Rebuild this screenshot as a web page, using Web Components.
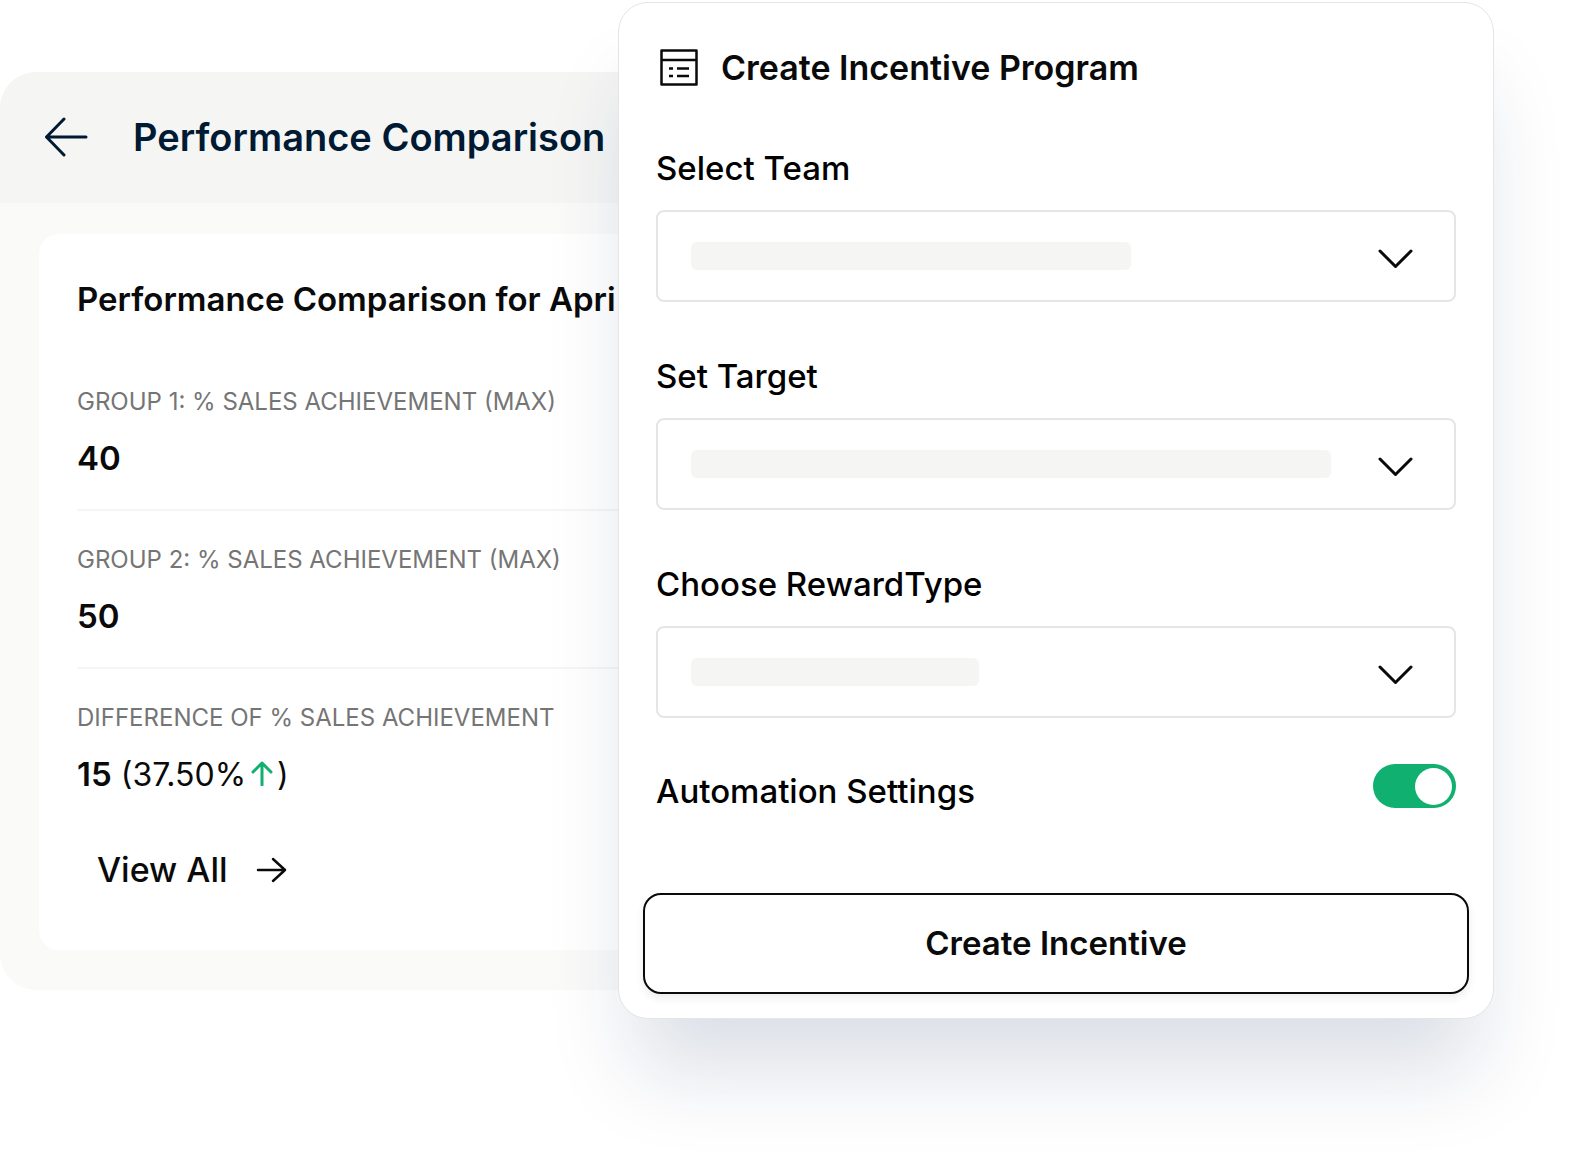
<!DOCTYPE html>
<html lang="en">
<head>
<meta charset="UTF-8">
<meta name="viewport" content="width=device-width, initial-scale=1">
<title>Create Incentive Program</title>
<style>
  body {
    margin: 0;
    background: #fff;
    color: #0a0a0a;
    font-family: Inter, "Liberation Sans", sans-serif;
  }
</style>
</head>
<body>
<incentive-page>
  <comparison-panel slot="panel" heading="Performance Comparison">
    <span slot="title">Performance Comparison for Apri</span>
    <metric-row label="Group 1: % Sales Achievement (Max)"><b>40</b></metric-row>
    <metric-row label="Group 2: % Sales Achievement (Max)"><b>50</b></metric-row>
    <metric-row label="Difference of % Sales Achievement" last><b>15</b> (37.50%<trend-arrow></trend-arrow>)</metric-row>
  </comparison-panel>

  <incentive-dialog slot="dialog">
    <span slot="title">Create Incentive Program</span>
    <select-field class="team">Select Team</select-field>
    <select-field class="target">Set Target</select-field>
    <select-field class="reward">Choose RewardType</select-field>
    <toggle-field slot="toggle" checked>Automation Settings</toggle-field>
    <span slot="action">Create Incentive</span>
  </incentive-dialog>
</incentive-page>

<script>
// Page: panel on the left, dialog laid over its right side
class IncentivePage extends HTMLElement {
  constructor() {
    super();
    this.attachShadow({ mode: 'open' }).innerHTML = `
      <style>
        :host { display: grid; grid-template-columns: 618fr 876fr 102fr; align-items: start; padding: 2px 0 148px; overflow: hidden; }
        .panel { grid-area: 1 / 1 / 2 / 3; padding: 70px 24px 0 0; min-width: 0; }
        .dialog { grid-area: 1 / 2 / 2 / 3; z-index: 1; min-width: 0; }
      </style>
      <main class="panel"><slot name="panel"></slot></main>
      <div class="dialog"><slot name="dialog"></slot></div>
    `;
  }
}

// Comparison panel with its header bar and white card
class ComparisonPanel extends HTMLElement {
  constructor() {
    super();
    this.attachShadow({ mode: 'open' });
  }

  connectedCallback() {
    this.shadowRoot.innerHTML = `
      <style>
        :host { display: block; background: #fafaf9; border-radius: 36px; overflow: hidden; white-space: nowrap; }
        header { display: flex; align-items: center; gap: 43px; padding: 42px 44px 43px; background: #f5f5f4; color: #001a33; }
        h1 { margin: 0; font-size: 38px; line-height: 46px; font-weight: 600; }
        .back { display: flex; padding: 0; border: 0; background: none; color: inherit; cursor: pointer; }
        .card { margin: 31px 39px 40px; padding: 45px 38px 60px; border-radius: 20px; background: #fff; }
        h2 { margin: 0 0 67px; font-size: 33px; line-height: 40px; font-weight: 600; }
        a { display: inline-flex; align-items: center; gap: 28px; margin: 55px 0 0 20px; font-size: 34px; line-height: 40px; font-weight: 500; color: inherit; text-decoration: none; }
        svg { display: block; fill: none; stroke: currentColor; stroke-linecap: round; stroke-linejoin: round; }
      </style>
      <header>
        <button class="back" type="button" aria-label="Back">
          <svg width="46" height="40" viewBox="0 0 46 40" stroke-width="3"><path d="M20 2 2.500 20 20 38M2.500 20H42"/></svg>
        </button>
        <h1>${this.getAttribute('heading')}</h1>
      </header>
      <section class="card">
        <h2><slot name="title"></slot></h2>
        <slot></slot>
        <a href="#all">View All
          <svg width="32" height="26" viewBox="0 0 32 26" stroke-width="2.500"><path d="M2 13H29M17 2 29 13 17 24"/></svg>
        </a>
      </section>
    `;
  }
}

class MetricRow extends HTMLElement {
  constructor() {
    super();
    this.attachShadow({ mode: 'open' });
  }

  connectedCallback() {
    this.shadowRoot.innerHTML = `
      <style>
        :host { display: block; padding-bottom: 30px; margin-bottom: 33px; border-bottom: 2px solid #f5f5f4; }
        :host([last]) { padding: 0; margin: 0; border: 0; }
        .label { margin-bottom: 21px; font-size: 24px; line-height: 32px; color: #757575; text-transform: uppercase; }
        .value { font-size: 32px; line-height: 40px; }
        ::slotted(b) { font-size: 33px; line-height: 1; font-weight: 600; }
      </style>
      <div class="label">${this.getAttribute('label')}</div>
      <div class="value"><slot></slot></div>
    `;
  }
}

class TrendArrow extends HTMLElement {
  constructor() {
    super();
    this.attachShadow({ mode: 'open' }).innerHTML = `
      <style>
        :host { display: inline-block; margin: 0 4px 0 5px; }
        svg { display: block; }
      </style>
      <svg width="22" height="26" viewBox="0 0 22 26" fill="none" stroke="#10b070" stroke-width="3" stroke-linecap="round" stroke-linejoin="round" aria-hidden="true"><path d="M11 25V3M2 12 11 3 20 12"/></svg>
    `;
  }
}

// Dialog: title, fields, toggle and submit button
class IncentiveDialog extends HTMLElement {
  constructor() {
    super();
    this.attachShadow({ mode: 'open' }).innerHTML = `
      <style>
        :host {
          display: block;
          padding: 45px 24px 24px;
          border: 1px solid #e5e5e5;
          border-radius: 30px;
          background: #fff;
          box-shadow: 0 68px 86px -16px rgba(16, 42, 84, 0.15);
        }
        header { display: flex; align-items: center; gap: 21px; margin: 0 15px 60px; }
        h2 { margin: 0; font-size: 34px; line-height: 40px; font-weight: 600; }
        .fields { display: grid; gap: 54px; margin: 0 13px 46px; }
        .toggle { margin: 0 13px 75px; }
        button {
          display: block;
          width: 100%;
          padding: 28px 24px 29px;
          border: 2px solid #0a0a0a;
          border-radius: 18px;
          background: #fff;
          box-shadow: 0 4px 8px rgba(0, 0, 0, 0.08);
          color: inherit;
          font: 600 33px/40px Inter, "Liberation Sans", sans-serif;
          cursor: pointer;
        }
      </style>
      <form>
        <header>
          <svg width="42" height="40" viewBox="0 0 42 40" fill="none" stroke="#0a0a0a" stroke-width="2.500" stroke-linejoin="round" aria-hidden="true">
            <path d="M3.500 2.500H38.500V36.500H3.500ZM3.500 12H38.500M11 20.500H15M19 20.500H31M11 28H15M19 28H31"/>
          </svg>
          <h2><slot name="title"></slot></h2>
        </header>
        <div class="fields"><slot></slot></div>
        <div class="toggle"><slot name="toggle"></slot></div>
        <button type="button"><slot name="action"></slot></button>
      </form>
    `;
  }
}

// Drop-down whose value is still a placeholder bar
class SelectField extends HTMLElement {
  constructor() {
    super();
    this.attachShadow({ mode: 'open' }).innerHTML = `
      <style>
        :host { display: block; --bar: 55%; }
        :host(.target) { --bar: 80%; }
        :host(.reward) { --bar: 36%; }
        label { display: block; margin-bottom: 22px; font-size: 33px; line-height: 40px; font-weight: 500; color: #000; }
        .box { display: grid; align-items: center; }
        .box > * { grid-area: 1 / 1; }
        select { appearance: none; width: 100%; height: 92px; border: 2px solid #e5e5e5; border-radius: 8px; background: #fff; cursor: pointer; }
        .bar { width: var(--bar); height: 28px; margin-left: 35px; border-radius: 6px; background: #f5f5f4; pointer-events: none; }
        svg { justify-self: end; margin-right: 42px; pointer-events: none; }
      </style>
      <label for="choice"><slot></slot></label>
      <div class="box">
        <select id="choice"><option></option></select>
        <span class="bar"></span>
        <svg width="36" height="28" viewBox="0 0 36 28" fill="none" stroke="#0a0a0a" stroke-width="3" stroke-linecap="round" stroke-linejoin="round" aria-hidden="true"><path d="M2 9 17.500 24.500 33 9"/></svg>
      </div>
    `;
  }
}

class ToggleField extends HTMLElement {
  constructor() {
    super();
    this.attachShadow({ mode: 'open' }).innerHTML = `
      <style>
        :host { display: flex; justify-content: space-between; align-items: flex-start; }
        label { font-size: 33px; line-height: 54px; font-weight: 500; color: #000; }
        input { appearance: none; display: flex; align-items: center; width: 83px; height: 44px; margin: 0; padding: 0 4px; border-radius: 22px; background: #d4d4d4; cursor: pointer; }
        input::before { content: ""; width: 37px; height: 37px; border-radius: 50%; background: #fff; }
        input:checked { justify-content: flex-end; background: #10b070; }
      </style>
      <label for="toggle"><slot></slot></label>
      <input id="toggle" type="checkbox" role="switch">
    `;
  }

  connectedCallback() {
    this.shadowRoot.querySelector('input').checked = this.hasAttribute('checked');
  }
}

customElements.define('incentive-page', IncentivePage);
customElements.define('comparison-panel', ComparisonPanel);
customElements.define('metric-row', MetricRow);
customElements.define('trend-arrow', TrendArrow);
customElements.define('incentive-dialog', IncentiveDialog);
customElements.define('select-field', SelectField);
customElements.define('toggle-field', ToggleField);
</script>
</body>
</html>
